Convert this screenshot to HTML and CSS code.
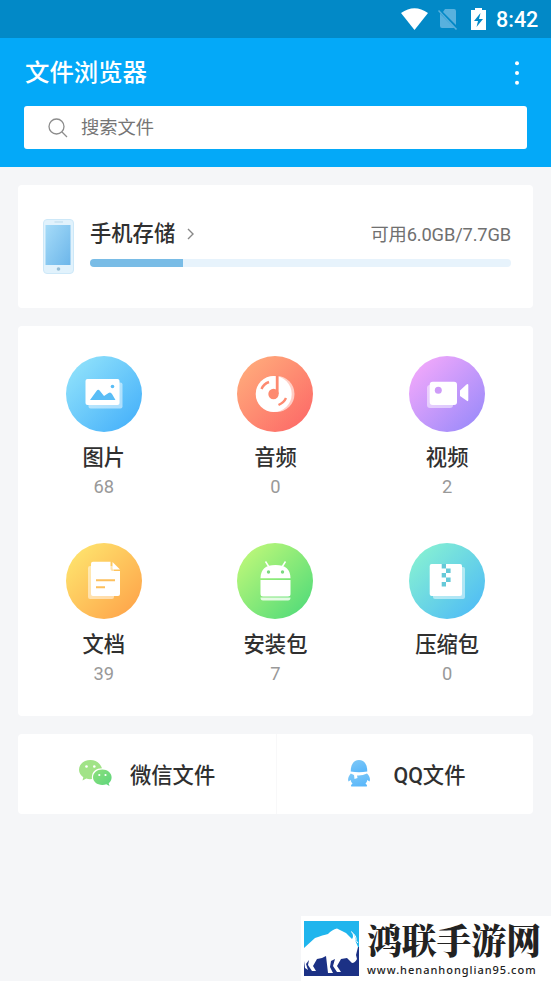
FILE: index.html
```html
<!DOCTYPE html>
<html lang="zh-CN">
<head>
<meta charset="utf-8">
<title>文件浏览器</title>
<link rel="stylesheet" href="styles.css">
</head>
<body>
<div class="status">
  <svg class="wifi" width="27" height="23" viewBox="0 0 27 23"><path d="M0 5Q13.500-4.500 27 5L13.500 22Z" fill="#fff"/></svg>
  <svg class="sim" width="20" height="22" viewBox="0 0 20 22"><path d="M7 1H16Q18 1 18 3V17L5 4ZM2 5.500L16.500 20H4Q2 20 2 18Z" fill="#58b1de"/><path d="M.5 2.500L18.500 21.500" stroke="#58b1de" stroke-width="1.500"/></svg>
  <svg class="battery" width="15" height="22" viewBox="0 0 15 22"><path d="M4 0H11V2H15V22H0V2H4Z" fill="#fff"/><path d="M9.500 5L3 13H7L5.500 19L12 11H8Z" fill="#0289c7"/></svg>
  <span class="clock">8:42</span>
</div>
<header class="header">
  <div class="title-row">
    <h1 class="title">文件浏览器</h1>
    <svg width="6" height="26" viewBox="0 0 6 26" fill="#fff"><circle cx="3" cy="3.300" r="2"/><circle cx="3" cy="13" r="2"/><circle cx="3" cy="22.700" r="2"/></svg>
  </div>
  <div class="search">
    <svg width="20" height="20" viewBox="0 0 20 20" fill="none" stroke="#8c8c8c" stroke-width="1.300"><circle cx="8.500" cy="8.500" r="7.500"/><path d="M14 14L19 19"/></svg>
    <span>搜索文件</span>
  </div>
</header>
<main class="main">
  <section class="card storage">
    <svg class="phone" width="32" height="55" viewBox="0 0 32 55">
      <defs><linearGradient id="ph" x1="0" y1="0" x2="1" y2="1"><stop offset="0" stop-color="#a5dbf8"/><stop offset="1" stop-color="#6cb6ea"/></linearGradient></defs>
      <rect x=".5" y=".5" width="30" height="54" rx="3.500" fill="#e1f2fc" stroke="#cde8f8"/>
      <rect x="2.500" y="6" width="25" height="40" fill="url(#ph)"/><path d="M11.500 3H20" stroke="#b9d9eb"/><circle cx="15.500" cy="50" r="1.800" fill="#95bdd5"/>
    </svg>
    <div class="storage-info">
      <div class="storage-row">
        <span class="storage-name">手机存储</span>
        <svg width="8" height="12" viewBox="0 0 8 12" fill="none" stroke="#888" stroke-width="1.400"><path d="M1 1L6 6L1 11"/></svg>
        <span class="storage-free">可用6.0GB/7.7GB</span>
      </div>
      <div class="bar"><div class="bar-fill"></div></div>
    </div>
  </section>

  <section class="card grid">
    <div class="tile">
      <svg width="76" height="76" viewBox="0 0 76 76">
        <defs><linearGradient id="g1" x1="0.100" y1="0.100" x2="0.900" y2="0.900"><stop offset="0" stop-color="#8fe1fb"/><stop offset="1" stop-color="#48b2fa"/></linearGradient></defs>
        <circle cx="38" cy="38" r="38" fill="url(#g1)"/>
        <rect x="22.500" y="26.500" width="34" height="26" rx="2" fill="#fff" opacity=".5"/>
        <rect x="19.500" y="23" width="34" height="26" rx="2" fill="#fff"/>
        <path d="M24 44L30.500 35Q32.300 32.500 34 35L38 40L42.500 37Q44.500 35.500 46 38L49.500 44Z" fill="#59bdf6"/><circle cx="46.500" cy="30.500" r="1.800" fill="#59bdf6"/>
      </svg>
      <span class="name">图片</span><span class="count">68</span>
    </div>
    <div class="tile">
      <svg width="76" height="76" viewBox="0 0 76 76">
        <defs><linearGradient id="g2" x1="0.100" y1="0.100" x2="0.900" y2="0.900"><stop offset="0" stop-color="#ffaa7b"/><stop offset="1" stop-color="#fd6c68"/></linearGradient></defs>
        <circle cx="38" cy="38" r="38" fill="url(#g2)"/>
        <circle cx="39.500" cy="38" r="18" fill="#fff" opacity=".6"/><circle cx="36.700" cy="38" r="18" fill="#fff"/>
        <path d="M40.200 19.500V38" stroke="#fd8a70" stroke-width="2.800"/><circle cx="36.500" cy="38" r="5.200" fill="#fd8a70"/>
        <path d="M24.500 33Q26.500 28 32 26M41.500 49Q47 46.500 49 42" fill="none" stroke="#fd8a70" stroke-width="2.400"/>
      </svg>
      <span class="name">音频</span><span class="count">0</span>
    </div>
    <div class="tile">
      <svg width="76" height="76" viewBox="0 0 76 76">
        <defs><linearGradient id="g3" x1="0.100" y1="0.100" x2="0.900" y2="0.900"><stop offset="0" stop-color="#f1a8fb"/><stop offset="1" stop-color="#9d8bfa"/></linearGradient></defs>
        <circle cx="38" cy="38" r="38" fill="url(#g3)"/>
        <rect x="18" y="29" width="26" height="23" rx="3" fill="#fff" opacity=".5"/>
        <rect x="20.700" y="25.700" width="27.300" height="23.300" rx="3" fill="#fff"/>
        <path d="M51 34.500L57.500 28.500Q59.300 27.500 59.300 29V44Q59.300 46 57.500 44.500L51 40Z" fill="#fff"/><circle cx="29.300" cy="34.300" r="3.500" fill="#ce9cf8"/>
      </svg>
      <span class="name">视频</span><span class="count">2</span>
    </div>
    <div class="tile">
      <svg width="76" height="76" viewBox="0 0 76 76">
        <defs><linearGradient id="g4" x1="0.100" y1="0.100" x2="0.900" y2="0.900"><stop offset="0" stop-color="#fee36d"/><stop offset="1" stop-color="#fea64b"/></linearGradient></defs>
        <circle cx="38" cy="38" r="38" fill="url(#g4)"/>
        <rect x="22" y="23" width="26" height="33" rx="2" fill="#fff" opacity=".5"/>
        <path d="M27 18.700H44.500V26Q44.500 28 46.500 28H54V51Q54 53 52 53H27Q25 53 25 51V20.700Q25 18.700 27 18.700Z" fill="#fff"/>
        <path d="M46.500 19L54 26.500H48Q46.500 26.500 46.500 25Z" fill="#fff"/><path d="M30 37.300H49M30 44.300H39" stroke="#fdc05d" stroke-width="2"/>
      </svg>
      <span class="name">文档</span><span class="count">39</span>
    </div>
    <div class="tile">
      <svg width="76" height="76" viewBox="0 0 76 76">
        <defs><linearGradient id="g5" x1="0.100" y1="0.100" x2="0.900" y2="0.900"><stop offset="0" stop-color="#bcf779"/><stop offset="1" stop-color="#55dc79"/></linearGradient></defs>
        <circle cx="38" cy="38" r="38" fill="url(#g5)"/>
        <path d="M23.500 54.500H53.500Q53.500 57.500 51 57.500H26Q23.500 57.500 23.500 54.500Z" fill="#fff" opacity=".8"/>
        <path d="M23.500 35.300Q23.500 22 38.500 22Q53.500 22 53.500 35.300Z" fill="#fff"/><path d="M28.500 18.500L32 24M48.500 18.500L45 24" stroke="#fff" stroke-width="1.500"/>
        <path d="M23.500 37H53.500V51Q53.500 53.500 51 53.500H26Q23.500 53.500 23.500 51Z" fill="#fff"/><circle cx="31.500" cy="29" r="1.700" fill="#7bd981"/><circle cx="45.500" cy="29" r="1.700" fill="#7bd981"/>
      </svg>
      <span class="name">安装包</span><span class="count">7</span>
    </div>
    <div class="tile">
      <svg width="76" height="76" viewBox="0 0 76 76">
        <defs><linearGradient id="g6" x1="0.100" y1="0.100" x2="0.900" y2="0.900"><stop offset="0" stop-color="#86f0d3"/><stop offset="1" stop-color="#50bdf5"/></linearGradient></defs>
        <circle cx="38" cy="38" r="38" fill="url(#g6)"/>
        <rect x="24" y="24" width="32" height="32" rx="2" fill="#fff" opacity=".5"/><rect x="20.700" y="21" width="32.300" height="32" rx="2" fill="#fff"/>
        <path d="M32.700 21h4.300v4.500h-4.300zM37 25.500h4.600v4.500h-4.600zM32.700 30h4.300v4.500h-4.300zM37 34.500h4.600v4.500h-4.600zM32.700 39h4.300v4.500h-4.300z" fill="#66c9d8"/>
      </svg>
      <span class="name">压缩包</span><span class="count">0</span>
    </div>
  </section>

  <section class="card apps">
    <div class="app">
      <svg width="33" height="27" viewBox="0 0 33 27">
        <defs><linearGradient id="wc" x1="0" y1="0" x2="1" y2="1"><stop offset="0" stop-color="#8ee07c"/><stop offset="1" stop-color="#5bd57c"/></linearGradient></defs>
        <path d="M11.500 0C5 0 0 4.200 0 9.700C0 13 1.800 15.500 4.300 17.300L3.500 20.500L7.300 18.500Q10 19.500 13 19C12 12 17 8.300 23 8.300C21.500 3.500 17 0 11.500 0Z" fill="#a1e387"/>
        <path d="M23.300 9.500C18 9.500 14 13 14 17.300C14 21.700 18 25 23.300 25Q25.500 25 27.300 24.300L30.500 26L29.700 23.200C31.700 21.800 32.600 19.700 32.600 17.300C32.600 13 28.500 9.500 23.300 9.500Z" fill="url(#wc)"/>
        <g fill="#fff"><circle cx="7.500" cy="6.500" r="1.300"/><circle cx="15.300" cy="6.500" r="1.300"/><circle cx="20.300" cy="15" r="1.100"/><circle cx="26.500" cy="15" r="1.100"/></g>
      </svg>
      <span>微信文件</span>
    </div>
    <div class="app app-qq">
      <svg width="22" height="27" viewBox="0 0 22 27">
        <defs><linearGradient id="qq" x1="0" y1="0" x2="0.500" y2="1"><stop offset="0" stop-color="#80c9f7"/><stop offset="1" stop-color="#5cb8fa"/></linearGradient></defs>
        <path d="M2.700 11.500C2.700 4 6 0 11 0S19.300 4 19.300 11.500Q11 13 2.700 11.500Z" fill="url(#qq)"/>
        <path d="M2.800 13.500L6 15L6.500 19L9.500 18L9 15.500Q14 16 19 13.500C22 16.500 22.500 19.500 21.500 21.500L19.300 20Q19 22.500 17.500 23.500Q20 26 18.500 26.500H3.500Q2 26 4.500 23.500Q3 22.500 2.700 20L.5 21.500C-.5 19 .5 16 2.800 13.500Z" fill="url(#qq)"/>
      </svg>
      <span>QQ文件</span>
    </div>
  </section>
</main>
<aside class="mark">
  <svg width="55" height="55" viewBox="0 0 55 55">
    <path d="M0 0H55V55H0Z" fill="#20b5ed"/><path d="M0 30L55 26V55H0Z" fill="#1c3185"/>
    <path d="M0 27L11 17Q19 14 24 13Q28 8.500 33 7.500L42 12L48 18Q50 16 48 11.500Q52 15 51.500 20L54 26L52 34L53 38Q51 42 48 42L43 37L37 38L33 45L37 51H33L29 45L31 38L27 40L26 46L29 52H24L22 35L18 37L13 38L9 45L12 50H8L4 44L5 39L2 43L4 49L1 47L0 40Z" fill="#fff"/>
    <path d="M47 10.500Q53 15 52 19.500L54 22" fill="none" stroke="#fff" stroke-width="1"/>
  </svg>
  <div class="mark-text"><span class="mark-name">鸿联手游网</span><span class="mark-url">www.henanhonglian95.com</span></div>
</aside>
</body>
</html>
```
FILE: styles.css
```css
* { box-sizing: border-box; }
body {
  margin: 0;
  height: 981px;
  overflow: hidden;
  background: #f5f6f8;
  color: #303030;
  font-family: Roboto, "Noto Sans CJK SC", sans-serif;
}
svg { display: block; flex: none; }
.status {
  height: 38px;
  padding: 0 12px 0 401px;
  display: flex;
  align-items: center;
  background: #0289c7;
  color: #fff;
}
.sim { margin-left: 10px; }
.battery { margin-left: 13px; }
.clock {
  margin-left: 10px;
  padding-top: 2px;
  font-size: 21.5px;
  font-weight: 500;
  line-height: 36px;
  white-space: nowrap;
}
.header {
  height: 129px;
  padding: 17px 25px 0;
  background: #04a9f8;
}
.title-row {
  height: 35px;
  padding-right: 6px;
  display: flex;
  align-items: center;
  justify-content: space-between;
}
.title {
  margin: 0;
  color: #fff;
  font-size: 24.4px;
  font-weight: 500;
  line-height: 35px;
}
.search {
  height: 43px;
  margin: 16px -1px 0;
  padding-left: 24px;
  display: flex;
  align-items: center;
  gap: 13px;
  border-radius: 3px;
  background: #fff;
  color: #757575;
  font-size: 18.3px;
  line-height: 26px;
}
.main {
  padding: 18px 18px 0;
  display: flex;
  flex-direction: column;
  gap: 18px;
}
.card {
  border-radius: 4px;
  background: #fff;
}
.storage {
  height: 123px;
  padding: 34px 22px 0 25px;
  display: flex;
  gap: 15px;
}
.storage-info { flex: 1; }
.storage-row {
  height: 30px;
  display: flex;
  align-items: center;
  gap: 12px;
}
.storage-name {
  font-size: 21.3px;
  font-weight: 500;
  line-height: 30px;
}
.storage-free {
  margin: -3px 0 0 auto;
  color: #707070;
  font-size: 18.3px;
  letter-spacing: -0.15px;
}
.bar {
  height: 8px;
  margin-top: 10px;
  overflow: hidden;
  border-radius: 4px;
  background: #e7f3fc;
}
.bar-fill {
  width: 22%;
  height: 8px;
  background: #79bce6;
}
.grid {
  height: 390px;
  padding-top: 30px;
  display: grid;
  grid-template-columns: repeat(3, 1fr);
  grid-auto-rows: 187px;
}
.tile {
  display: flex;
  flex-direction: column;
  align-items: center;
}
.name {
  margin-top: 10px;
  font-size: 21.3px;
  font-weight: 500;
  line-height: 32px;
}
.count {
  margin-top: 1px;
  color: #999;
  font-size: 18.3px;
  line-height: 24px;
}
.apps {
  height: 80px;
  display: flex;
}
.app {
  width: 50%;
  padding: 0 0 1px 61px;
  display: flex;
  align-items: center;
  gap: 18px;
  font-size: 21.3px;
  font-weight: 500;
}
.app-qq {
  padding-left: 71px;
  gap: 24px;
  border-left: 1px solid #f8f8f9;
}
.mark {
  position: absolute;
  right: 0;
  bottom: 0;
  width: 250px;
  height: 65px;
  padding: 5px 0 0 3px;
  display: flex;
  gap: 8px;
  background: #fff;
}
.mark-text {
  display: flex;
  flex-direction: column;
  color: #222;
  white-space: nowrap;
}
.mark-name {
  font-family: "Noto Serif CJK SC", "Noto Sans CJK SC", serif;
  font-size: 34.8px;
  font-weight: 900;
  line-height: 37px;
}
.mark-url {
  margin-top: 5px;
  font-family: "Noto Sans", sans-serif;
  font-size: 11px;
  font-weight: 500;
  letter-spacing: 0.98px;
  line-height: 13px;
}
```
